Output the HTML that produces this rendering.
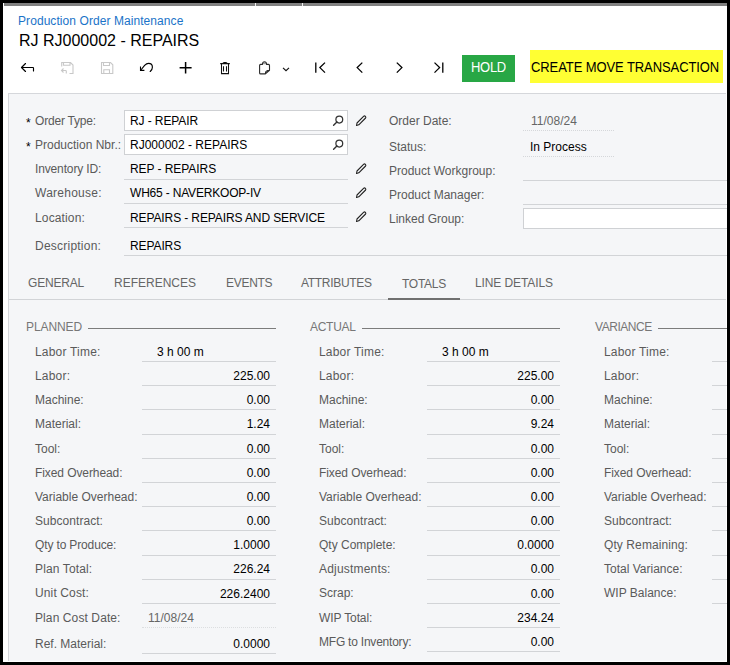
<!DOCTYPE html>
<html><head><meta charset="utf-8"><style>
html,body{margin:0;padding:0;}
body{width:730px;height:665px;background:#000;position:relative;overflow:hidden;font-family:"Liberation Sans",sans-serif;}
.t{position:absolute;white-space:nowrap;}
.r{position:absolute;}
</style></head><body>
<div class="r" style="left:3px;top:3px;width:724px;height:659px;background:#fff;"></div>
<div class="r" style="left:4px;top:3px;width:723px;height:3px;background:#808080;"></div>
<div class="r" style="left:255px;top:3px;width:1px;height:3px;background:#f0f0f0;"></div>
<div class="r" style="left:302px;top:3px;width:1px;height:3px;background:#f0f0f0;"></div>
<div class="t" style="left:18px;top:15px;font-size:12px;line-height:12px;color:#1a73c8;letter-spacing:0.07px">Production Order Maintenance</div>
<div class="t" style="left:19px;top:33px;font-size:16px;line-height:16px;color:#000;">RJ RJ000002 - REPAIRS</div>
<svg class="r" style="left:18px;top:58px;" width="20" height="20" viewBox="0 0 20 20"><path d="M7.5 5.5 L3.5 9.5 L7.5 13.5 M3.5 9.5 H15 Q15.5 9.5 15.5 10.2 V13" fill="none" stroke="#000" stroke-width="1.15" stroke-linecap="round" stroke-linejoin="round"/></svg>
<svg class="r" style="left:56px;top:58px;" width="22" height="20" viewBox="0 0 22 20"><path d="M5.7 8.5 V4.5 H14.5 L17 7 V15.5 H13.5 M7.5 4.5 V7.3 H14 V4.5 M7.5 10.5 L5.5 12.5 L7.5 14.5 M5.5 12.5 H9.5 Q10.3 12.5 10.3 13.3 V15.5" fill="none" stroke="#c8c8c8" stroke-width="1.1"/></svg>
<svg class="r" style="left:96px;top:58px;" width="22" height="20" viewBox="0 0 22 20"><path d="M5.5 4.5 H14.5 L16.8 6.8 V15.5 H5.5 Z M7.5 4.5 V7.5 H13.5 V4.5 M7.8 15.5 V11.8 H13.5 V15.5" fill="none" stroke="#c8c8c8" stroke-width="1.1"/></svg>
<svg class="r" style="left:134px;top:56px;" width="24" height="24" viewBox="0 0 24 24"><path d="M6.5 10.6 V14.4 H10.4" fill="none" stroke="#000" stroke-width="1.1"/><path d="M6.9 14 L10.6 9.4 Q12.6 7.4 14.5 7.4 Q18.4 7.4 18.4 11.2 Q18.4 13.6 16.2 15.5" fill="none" stroke="#000" stroke-width="1.15" stroke-linecap="round"/></svg>
<svg class="r" style="left:174px;top:56px;" width="24" height="24" viewBox="0 0 24 24"><path d="M5.6 11.7 H17.6 M11.6 6 V17.6" fill="none" stroke="#000" stroke-width="1.5"/></svg>
<svg class="r" style="left:214px;top:56px;" width="24" height="24" viewBox="0 0 24 24"><path d="M6.2 7.6 H15.8 M7.5 7.6 V17.6 H14.5 V7.6 M9 7.6 Q9 6.5 10.1 6.5 H11.9 Q13 6.5 13 7.6 M9.5 10.2 V15.5 M12.5 10.2 V15.5" fill="none" stroke="#111" stroke-width="1.05"/></svg>
<svg class="r" style="left:252px;top:56px;" width="44" height="24" viewBox="0 0 44 24"><path d="M10.9 8.3 Q11.1 6.2 12.5 6.2 Q13.9 6.2 14.1 8.3 Z" fill="#a0a0a0"/><path d="M7.6 9.4 Q7.6 8.4 8.6 8.4 H10.4 Q10.6 5.7 12.5 5.7 Q14.4 5.7 14.6 8.4 H16.5 Q17.5 8.4 17.5 9.4 V14.3 L13.4 17.9 H8.6 Q7.6 17.9 7.6 16.9 Z M13.4 17.8 Q13.5 15.6 14.6 15.1 Q15.5 14.6 17.4 14.4" fill="none" stroke="#2a2a2a" stroke-width="1.1" stroke-linejoin="round"/><path d="M31 11.8 L34 14.6 L37 11.8" fill="none" stroke="#111" stroke-width="1.15"/></svg>
<svg class="r" style="left:306px;top:56px;" width="68" height="24" viewBox="0 0 68 24"><path d="M9.8 6.5 V16.8 M19 6.6 L13.9 11.6 L19 16.6" fill="none" stroke="#000" stroke-width="1.3"/><path d="M56.3 6.6 L51.2 11.6 L56.3 16.6" fill="none" stroke="#000" stroke-width="1.3"/></svg>
<svg class="r" style="left:384px;top:56px;" width="68" height="24" viewBox="0 0 68 24"><path d="M12.8 6.6 L17.9 11.6 L12.8 16.6" fill="none" stroke="#000" stroke-width="1.3"/><path d="M50.5 6.6 L55.6 11.6 L50.5 16.6 M58.8 6.5 V16.8" fill="none" stroke="#000" stroke-width="1.3"/></svg>
<div class="r" style="left:462px;top:55px;width:53px;height:27px;background:#28a745;"></div>
<div class="t" style="left:471px;top:60px;font-size:13px;line-height:13px;color:#fff;letter-spacing:-0.3px;transform:scaleY(1.1);transform-origin:0 2px">HOLD</div>
<div class="r" style="left:530px;top:50px;width:193px;height:33px;background:#ffff33;"></div>
<div class="t" style="left:531px;top:60px;font-size:13px;line-height:13px;color:#000;letter-spacing:-0.09px;transform:scaleY(1.1);transform-origin:0 2px">CREATE MOVE TRANSACTION</div>
<div class="r" style="left:8px;top:93px;width:718px;height:568px;background:#f5f6f8;border-top:1px solid #d5d7db;border-left:1px solid #d5d7db;box-sizing:border-box"></div>
<div class="t" style="left:35px;top:115px;font-size:12px;line-height:12px;color:#5a5a5a;letter-spacing:-0.2px">Order Type:</div>
<div class="t" style="left:26px;top:117px;font-size:12px;line-height:12px;color:#000;">*</div>
<div class="t" style="left:35px;top:139px;font-size:12px;line-height:12px;color:#5a5a5a;letter-spacing:0px">Production Nbr.:</div>
<div class="t" style="left:26px;top:141px;font-size:12px;line-height:12px;color:#000;">*</div>
<div class="t" style="left:35px;top:163px;font-size:12px;line-height:12px;color:#5a5a5a;letter-spacing:-0.14px">Inventory ID:</div>
<div class="t" style="left:35px;top:187px;font-size:12px;line-height:12px;color:#5a5a5a;letter-spacing:0.25px">Warehouse:</div>
<div class="t" style="left:35px;top:212px;font-size:12px;line-height:12px;color:#5a5a5a;letter-spacing:0.14px">Location:</div>
<div class="t" style="left:35px;top:240px;font-size:12px;line-height:12px;color:#5a5a5a;letter-spacing:0.23px">Description:</div>
<div class="r" style="left:124px;top:110px;width:224px;height:21px;background:#fff;border:1px solid #cfd1d4;box-sizing:border-box"></div>
<div class="r" style="left:124px;top:134px;width:224px;height:21px;background:#fff;border:1px solid #cfd1d4;box-sizing:border-box"></div>
<div class="t" style="left:130px;top:115px;font-size:12px;line-height:12px;color:#000;letter-spacing:-0.1px">RJ - REPAIR</div>
<div class="t" style="left:130px;top:139px;font-size:12px;line-height:12px;color:#000;">RJ000002 - REPAIRS</div>
<svg class="r" style="left:331px;top:112px;" width="16" height="16" viewBox="0 0 16 16"><circle cx="8.3" cy="7.6" r="3.4" fill="none" stroke="#333" stroke-width="1.25"/><path d="M5.9 10 L2.6 13.3" stroke="#333" stroke-width="1.4" stroke-linecap="round"/></svg>
<svg class="r" style="left:331px;top:136px;" width="16" height="16" viewBox="0 0 16 16"><circle cx="8.3" cy="7.6" r="3.4" fill="none" stroke="#333" stroke-width="1.25"/><path d="M5.9 10 L2.6 13.3" stroke="#333" stroke-width="1.4" stroke-linecap="round"/></svg>
<svg class="r" style="left:354px;top:114px;" width="14" height="14" viewBox="0 0 14 14"><path d="M2.5 11.5 L3 9 L9.8 2.2 Q10.6 1.6 11.4 2.4 Q12.2 3.2 11.6 4 L4.8 10.8 Z" fill="none" stroke="#222" stroke-width="1.1" stroke-linejoin="round"/></svg>
<svg class="r" style="left:354px;top:162px;" width="14" height="14" viewBox="0 0 14 14"><path d="M2.5 11.5 L3 9 L9.8 2.2 Q10.6 1.6 11.4 2.4 Q12.2 3.2 11.6 4 L4.8 10.8 Z" fill="none" stroke="#222" stroke-width="1.1" stroke-linejoin="round"/></svg>
<svg class="r" style="left:354px;top:186px;" width="14" height="14" viewBox="0 0 14 14"><path d="M2.5 11.5 L3 9 L9.8 2.2 Q10.6 1.6 11.4 2.4 Q12.2 3.2 11.6 4 L4.8 10.8 Z" fill="none" stroke="#222" stroke-width="1.1" stroke-linejoin="round"/></svg>
<svg class="r" style="left:354px;top:210px;" width="14" height="14" viewBox="0 0 14 14"><path d="M2.5 11.5 L3 9 L9.8 2.2 Q10.6 1.6 11.4 2.4 Q12.2 3.2 11.6 4 L4.8 10.8 Z" fill="none" stroke="#222" stroke-width="1.1" stroke-linejoin="round"/></svg>
<div class="t" style="left:130px;top:163px;font-size:12px;line-height:12px;color:#000;letter-spacing:-0.06px">REP - REPAIRS</div>
<div class="r" style="left:124px;top:179px;width:224px;height:1px;background:#d2d4d7;"></div>
<div class="t" style="left:130px;top:187px;font-size:12px;line-height:12px;color:#000;letter-spacing:-0.19px">WH65 - NAVERKOOP-IV</div>
<div class="r" style="left:124px;top:203px;width:224px;height:1px;background:#d2d4d7;"></div>
<div class="t" style="left:130px;top:212px;font-size:12px;line-height:12px;color:#000;letter-spacing:-0.11px">REPAIRS - REPAIRS AND SERVICE</div>
<div class="r" style="left:124px;top:227px;width:224px;height:1px;background:#d2d4d7;"></div>
<div class="t" style="left:130px;top:240px;font-size:12px;line-height:12px;color:#000;letter-spacing:-0.1px">REPAIRS</div>
<div class="r" style="left:124px;top:255px;width:603px;height:1px;background:#d2d4d7;"></div>
<div class="t" style="left:389px;top:115px;font-size:12px;line-height:12px;color:#5a5a5a;">Order Date:</div>
<div class="t" style="left:389px;top:141px;font-size:12px;line-height:12px;color:#5a5a5a;">Status:</div>
<div class="t" style="left:389px;top:165px;font-size:12px;line-height:12px;color:#5a5a5a;">Product Workgroup:</div>
<div class="t" style="left:389px;top:189px;font-size:12px;line-height:12px;color:#5a5a5a;">Product Manager:</div>
<div class="t" style="left:389px;top:213px;font-size:12px;line-height:12px;color:#5a5a5a;">Linked Group:</div>
<div class="t" style="left:531px;top:115px;font-size:12px;line-height:12px;color:#666;">11/08/24</div>
<div class="r" style="left:523px;top:130px;width:91px;height:0;border-top:1px dotted #d5d7da"></div>
<div class="t" style="left:530px;top:141px;font-size:12px;line-height:12px;color:#000;">In Process</div>
<div class="r" style="left:523px;top:156px;width:91px;height:0;border-top:1px dotted #d5d7da"></div>
<div class="r" style="left:523px;top:180px;width:204px;height:1px;background:#d2d4d7;"></div>
<div class="r" style="left:523px;top:204px;width:204px;height:1px;background:#d2d4d7;"></div>
<div class="r" style="left:523px;top:208px;width:204px;height:21px;background:#fff;border:1px solid #cfd1d4;border-right:none;box-sizing:border-box"></div>
<div class="t" style="left:28px;top:277px;font-size:12px;line-height:12px;color:#666;letter-spacing:-0.2px">GENERAL</div>
<div class="t" style="left:114px;top:277px;font-size:12px;line-height:12px;color:#666;letter-spacing:0px">REFERENCES</div>
<div class="t" style="left:226px;top:277px;font-size:12px;line-height:12px;color:#666;letter-spacing:-0.28px">EVENTS</div>
<div class="t" style="left:301px;top:277px;font-size:12px;line-height:12px;color:#666;letter-spacing:-0.3px">ATTRIBUTES</div>
<div class="t" style="left:402px;top:278px;font-size:12px;line-height:12px;color:#666;letter-spacing:-0.28px">TOTALS</div>
<div class="t" style="left:475px;top:277px;font-size:12px;line-height:12px;color:#666;letter-spacing:-0.1px">LINE DETAILS</div>
<div class="r" style="left:9px;top:299px;width:717px;height:1px;background:#d2d4d7;"></div>
<div class="r" style="left:388px;top:298px;width:72px;height:2px;background:#707070;"></div>
<div class="t" style="left:26px;top:321px;font-size:12px;line-height:12px;color:#777;letter-spacing:-0.1px">PLANNED</div>
<div class="r" style="left:88px;top:328px;width:188px;height:1px;background:#7c7c7c;"></div>
<div class="t" style="left:35px;top:346px;font-size:12px;line-height:12px;color:#5a5a5a;letter-spacing:0.2px">Labor Time:</div>
<div class="t" style="left:157px;top:346px;font-size:12px;line-height:12px;color:#000;">3 h 00 m</div>
<div class="r" style="left:142px;top:361px;width:134px;height:1px;background:#d2d4d7;"></div>
<div class="t" style="left:35px;top:370px;font-size:12px;line-height:12px;color:#5a5a5a;letter-spacing:0.2px">Labor:</div>
<div class="t" style="right:460px;top:370px;font-size:12px;line-height:12px;color:#000;">225.00</div>
<div class="r" style="left:142px;top:385px;width:134px;height:1px;background:#d2d4d7;"></div>
<div class="t" style="left:35px;top:394px;font-size:12px;line-height:12px;color:#5a5a5a;letter-spacing:0px">Machine:</div>
<div class="t" style="right:460px;top:394px;font-size:12px;line-height:12px;color:#000;">0.00</div>
<div class="r" style="left:142px;top:409px;width:134px;height:1px;background:#d2d4d7;"></div>
<div class="t" style="left:35px;top:418px;font-size:12px;line-height:12px;color:#5a5a5a;letter-spacing:0px">Material:</div>
<div class="t" style="right:460px;top:418px;font-size:12px;line-height:12px;color:#000;">1.24</div>
<div class="r" style="left:142px;top:434px;width:134px;height:1px;background:#d2d4d7;"></div>
<div class="t" style="left:35px;top:443px;font-size:12px;line-height:12px;color:#5a5a5a;letter-spacing:0px">Tool:</div>
<div class="t" style="right:460px;top:443px;font-size:12px;line-height:12px;color:#000;">0.00</div>
<div class="r" style="left:142px;top:458px;width:134px;height:1px;background:#d2d4d7;"></div>
<div class="t" style="left:35px;top:467px;font-size:12px;line-height:12px;color:#5a5a5a;letter-spacing:-0.085px">Fixed Overhead:</div>
<div class="t" style="right:460px;top:467px;font-size:12px;line-height:12px;color:#000;">0.00</div>
<div class="r" style="left:142px;top:482px;width:134px;height:1px;background:#d2d4d7;"></div>
<div class="t" style="left:35px;top:491px;font-size:12px;line-height:12px;color:#5a5a5a;letter-spacing:0px">Variable Overhead:</div>
<div class="t" style="right:460px;top:491px;font-size:12px;line-height:12px;color:#000;">0.00</div>
<div class="r" style="left:142px;top:506px;width:134px;height:1px;background:#d2d4d7;"></div>
<div class="t" style="left:35px;top:515px;font-size:12px;line-height:12px;color:#5a5a5a;letter-spacing:0.05px">Subcontract:</div>
<div class="t" style="right:460px;top:515px;font-size:12px;line-height:12px;color:#000;">0.00</div>
<div class="r" style="left:142px;top:530px;width:134px;height:1px;background:#d2d4d7;"></div>
<div class="t" style="left:35px;top:539px;font-size:12px;line-height:12px;color:#5a5a5a;letter-spacing:-0.14px">Qty to Produce:</div>
<div class="t" style="right:460px;top:539px;font-size:12px;line-height:12px;color:#000;">1.0000</div>
<div class="r" style="left:142px;top:555px;width:134px;height:1px;background:#d2d4d7;"></div>
<div class="t" style="left:35px;top:563px;font-size:12px;line-height:12px;color:#5a5a5a;letter-spacing:0.13px">Plan Total:</div>
<div class="t" style="right:460px;top:563px;font-size:12px;line-height:12px;color:#000;">226.24</div>
<div class="r" style="left:142px;top:579px;width:134px;height:1px;background:#d2d4d7;"></div>
<div class="t" style="left:35px;top:587px;font-size:12px;line-height:12px;color:#5a5a5a;letter-spacing:0.13px">Unit Cost:</div>
<div class="t" style="right:460px;top:588px;font-size:12px;line-height:12px;color:#000;">226.2400</div>
<div class="r" style="left:142px;top:603px;width:134px;height:1px;background:#d2d4d7;"></div>
<div class="t" style="left:35px;top:612px;font-size:12px;line-height:12px;color:#5a5a5a;letter-spacing:0.1px">Plan Cost Date:</div>
<div class="t" style="left:148px;top:612px;font-size:12px;line-height:12px;color:#666;">11/08/24</div>
<div class="r" style="left:142px;top:627px;width:134px;height:0;border-top:1px dotted #dcdee0"></div>
<div class="t" style="left:35px;top:638px;font-size:12px;line-height:12px;color:#5a5a5a;letter-spacing:0px">Ref. Material:</div>
<div class="t" style="right:460px;top:638px;font-size:12px;line-height:12px;color:#000;">0.0000</div>
<div class="r" style="left:142px;top:653px;width:134px;height:1px;background:#d2d4d7;"></div>
<div class="t" style="left:310px;top:321px;font-size:12px;line-height:12px;color:#777;letter-spacing:-0.28px">ACTUAL</div>
<div class="r" style="left:362px;top:328px;width:198px;height:1px;background:#7c7c7c;"></div>
<div class="t" style="left:319px;top:346px;font-size:12px;line-height:12px;color:#5a5a5a;letter-spacing:0.2px">Labor Time:</div>
<div class="t" style="left:442px;top:346px;font-size:12px;line-height:12px;color:#000;">3 h 00 m</div>
<div class="r" style="left:427px;top:361px;width:133px;height:1px;background:#d2d4d7;"></div>
<div class="t" style="left:319px;top:370px;font-size:12px;line-height:12px;color:#5a5a5a;letter-spacing:0.2px">Labor:</div>
<div class="t" style="right:176px;top:370px;font-size:12px;line-height:12px;color:#000;">225.00</div>
<div class="r" style="left:427px;top:385px;width:133px;height:1px;background:#d2d4d7;"></div>
<div class="t" style="left:319px;top:394px;font-size:12px;line-height:12px;color:#5a5a5a;letter-spacing:0px">Machine:</div>
<div class="t" style="right:176px;top:394px;font-size:12px;line-height:12px;color:#000;">0.00</div>
<div class="r" style="left:427px;top:409px;width:133px;height:1px;background:#d2d4d7;"></div>
<div class="t" style="left:319px;top:418px;font-size:12px;line-height:12px;color:#5a5a5a;letter-spacing:0px">Material:</div>
<div class="t" style="right:176px;top:418px;font-size:12px;line-height:12px;color:#000;">9.24</div>
<div class="r" style="left:427px;top:434px;width:133px;height:1px;background:#d2d4d7;"></div>
<div class="t" style="left:319px;top:443px;font-size:12px;line-height:12px;color:#5a5a5a;letter-spacing:0px">Tool:</div>
<div class="t" style="right:176px;top:443px;font-size:12px;line-height:12px;color:#000;">0.00</div>
<div class="r" style="left:427px;top:458px;width:133px;height:1px;background:#d2d4d7;"></div>
<div class="t" style="left:319px;top:467px;font-size:12px;line-height:12px;color:#5a5a5a;letter-spacing:-0.085px">Fixed Overhead:</div>
<div class="t" style="right:176px;top:467px;font-size:12px;line-height:12px;color:#000;">0.00</div>
<div class="r" style="left:427px;top:482px;width:133px;height:1px;background:#d2d4d7;"></div>
<div class="t" style="left:319px;top:491px;font-size:12px;line-height:12px;color:#5a5a5a;letter-spacing:0px">Variable Overhead:</div>
<div class="t" style="right:176px;top:491px;font-size:12px;line-height:12px;color:#000;">0.00</div>
<div class="r" style="left:427px;top:506px;width:133px;height:1px;background:#d2d4d7;"></div>
<div class="t" style="left:319px;top:515px;font-size:12px;line-height:12px;color:#5a5a5a;letter-spacing:0.05px">Subcontract:</div>
<div class="t" style="right:176px;top:515px;font-size:12px;line-height:12px;color:#000;">0.00</div>
<div class="r" style="left:427px;top:530px;width:133px;height:1px;background:#d2d4d7;"></div>
<div class="t" style="left:319px;top:539px;font-size:12px;line-height:12px;color:#5a5a5a;letter-spacing:0px">Qty Complete:</div>
<div class="t" style="right:176px;top:539px;font-size:12px;line-height:12px;color:#000;">0.0000</div>
<div class="r" style="left:427px;top:555px;width:133px;height:1px;background:#d2d4d7;"></div>
<div class="t" style="left:319px;top:563px;font-size:12px;line-height:12px;color:#5a5a5a;letter-spacing:0.19px">Adjustments:</div>
<div class="t" style="right:176px;top:563px;font-size:12px;line-height:12px;color:#000;">0.00</div>
<div class="r" style="left:427px;top:579px;width:133px;height:1px;background:#d2d4d7;"></div>
<div class="t" style="left:319px;top:587px;font-size:12px;line-height:12px;color:#5a5a5a;letter-spacing:0px">Scrap:</div>
<div class="t" style="right:176px;top:588px;font-size:12px;line-height:12px;color:#000;">0.00</div>
<div class="r" style="left:427px;top:603px;width:133px;height:1px;background:#d2d4d7;"></div>
<div class="t" style="left:319px;top:612px;font-size:12px;line-height:12px;color:#5a5a5a;letter-spacing:-0.1px">WIP Total:</div>
<div class="t" style="right:176px;top:612px;font-size:12px;line-height:12px;color:#000;">234.24</div>
<div class="r" style="left:427px;top:627px;width:133px;height:1px;background:#d2d4d7;"></div>
<div class="t" style="left:319px;top:636px;font-size:12px;line-height:12px;color:#5a5a5a;letter-spacing:-0.22px">MFG to Inventory:</div>
<div class="t" style="right:176px;top:636px;font-size:12px;line-height:12px;color:#000;">0.00</div>
<div class="r" style="left:427px;top:651px;width:133px;height:1px;background:#d2d4d7;"></div>
<div class="t" style="left:595px;top:321px;font-size:12px;line-height:12px;color:#777;letter-spacing:-0.45px">VARIANCE</div>
<div class="r" style="left:658px;top:328px;width:69px;height:1px;background:#7c7c7c;"></div>
<div class="t" style="left:604px;top:346px;font-size:12px;line-height:12px;color:#5a5a5a;letter-spacing:0.2px">Labor Time:</div>
<div class="r" style="left:712px;top:361px;width:15px;height:1px;background:#d2d4d7;"></div>
<div class="t" style="left:604px;top:370px;font-size:12px;line-height:12px;color:#5a5a5a;letter-spacing:0.2px">Labor:</div>
<div class="r" style="left:712px;top:385px;width:15px;height:1px;background:#d2d4d7;"></div>
<div class="t" style="left:604px;top:394px;font-size:12px;line-height:12px;color:#5a5a5a;letter-spacing:0px">Machine:</div>
<div class="r" style="left:712px;top:409px;width:15px;height:1px;background:#d2d4d7;"></div>
<div class="t" style="left:604px;top:418px;font-size:12px;line-height:12px;color:#5a5a5a;letter-spacing:0px">Material:</div>
<div class="r" style="left:712px;top:434px;width:15px;height:1px;background:#d2d4d7;"></div>
<div class="t" style="left:604px;top:443px;font-size:12px;line-height:12px;color:#5a5a5a;letter-spacing:0px">Tool:</div>
<div class="r" style="left:712px;top:458px;width:15px;height:1px;background:#d2d4d7;"></div>
<div class="t" style="left:604px;top:467px;font-size:12px;line-height:12px;color:#5a5a5a;letter-spacing:-0.085px">Fixed Overhead:</div>
<div class="r" style="left:712px;top:482px;width:15px;height:1px;background:#d2d4d7;"></div>
<div class="t" style="left:604px;top:491px;font-size:12px;line-height:12px;color:#5a5a5a;letter-spacing:0px">Variable Overhead:</div>
<div class="r" style="left:712px;top:506px;width:15px;height:1px;background:#d2d4d7;"></div>
<div class="t" style="left:604px;top:515px;font-size:12px;line-height:12px;color:#5a5a5a;letter-spacing:0.05px">Subcontract:</div>
<div class="r" style="left:712px;top:530px;width:15px;height:1px;background:#d2d4d7;"></div>
<div class="t" style="left:604px;top:539px;font-size:12px;line-height:12px;color:#5a5a5a;letter-spacing:0.09px">Qty Remaining:</div>
<div class="r" style="left:712px;top:555px;width:15px;height:1px;background:#d2d4d7;"></div>
<div class="t" style="left:604px;top:563px;font-size:12px;line-height:12px;color:#5a5a5a;letter-spacing:0px">Total Variance:</div>
<div class="r" style="left:712px;top:579px;width:15px;height:1px;background:#d2d4d7;"></div>
<div class="t" style="left:604px;top:587px;font-size:12px;line-height:12px;color:#5a5a5a;letter-spacing:0px">WIP Balance:</div>
<div class="r" style="left:712px;top:603px;width:15px;height:1px;background:#d2d4d7;"></div>
</body></html>
